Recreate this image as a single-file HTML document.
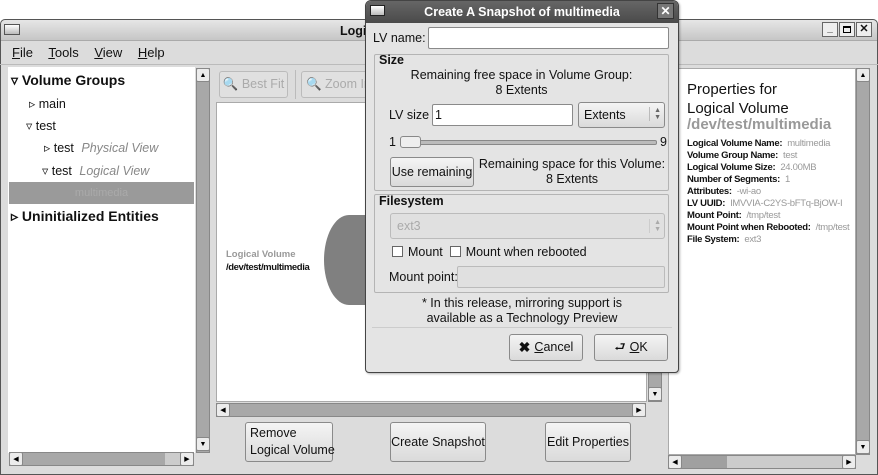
<!DOCTYPE html>
<html><head><meta charset="utf-8"><style>
*{box-sizing:border-box;margin:0;padding:0}
body{width:878px;height:475px;background:#fff;position:relative;overflow:hidden;font-family:"Liberation Sans",sans-serif;font-size:12.5px;color:#111}
.a{position:absolute;white-space:nowrap}
.btn{position:absolute;border:1px solid #8a8a8a;border-radius:3px;background:linear-gradient(#f4f4f4,#dadada);display:flex;align-items:center;justify-content:center;text-align:center;line-height:1.35;white-space:nowrap}
.trough{position:absolute;background:#a8a8a8;border:1px solid #888}
.arr{position:absolute;background:#ececec;border:1px solid #888;border-radius:2px;font-size:7px;display:flex;align-items:center;justify-content:center;color:#000}
.white{position:absolute;background:#fff;border:1px solid #999}
.frame{position:absolute;border:1px solid #b4b4b4;border-radius:2px}
.inp{position:absolute;background:#fff;border:1px solid #8a8a8a;border-radius:2px}
.cb{display:inline-block;width:11px;height:11px;border:1px solid #666;background:#fff;vertical-align:-1px;margin-right:5px}
.bl{font-weight:bold;font-size:9.5px;letter-spacing:-.3px}
.gr{color:#999;font-weight:normal;font-size:9.5px;margin-left:5px}
</style></head><body>
<div class="a" style="left:0;top:19px;width:878px;height:456px;background:#dcdcdc;border:1px solid #555;border-radius:5px 5px 0 0"></div>
<div class="a" style="left:1px;top:20px;width:876px;height:21px;background:linear-gradient(#e6e6e6,#c6c6c6);border-bottom:1px solid #aaa;border-radius:5px 5px 0 0"></div>
<div class="a" style="left:4px;top:24px;width:16px;height:11px;border:1px solid #555;background:linear-gradient(#fff,#bbb)"></div>
<div class="a" style="left:340px;top:24px;font-weight:bold;font-size:12.5px">Logi</div>
<div class="a" style="left:822px;top:22px;width:16px;height:15px;border:1px solid #666;background:#eee;font-size:10px;text-align:center;font-weight:bold;line-height:12px">_</div>
<div class="a" style="left:839px;top:22px;width:16px;height:15px;border:1px solid #666;background:#eee;"><div style="margin:3px;width:8px;height:7px;border:1px solid #000;border-top-width:2px"></div></div>
<div class="a" style="left:856px;top:22px;width:16px;height:15px;border:1px solid #666;background:#eee;font-size:11px;text-align:center;font-weight:bold;line-height:13px">✕</div>
<div class="a" style="left:12px;top:45px;font-size:13px;word-spacing:12px"><u>F</u>ile <u>T</u>ools <u>V</u>iew <u>H</u>elp</div>
<div class="a" style="left:0;top:64px;width:878px;height:1px;background:#bbb"></div>
<div class="white" style="left:8px;top:67px;width:187px;height:386px;border:none"></div>
<div class="a" style="left:11px;top:72px;font-size:14px;font-weight:bold">▿ Volume Groups</div>
<div class="a" style="left:29px;top:96px;font-size:12.5px">▹ main</div>
<div class="a" style="left:26px;top:118px;font-size:12.5px">▿ test</div>
<div class="a" style="left:44px;top:140px;font-size:12.5px">▹ test <i style="color:#888;margin-left:4px">Physical View</i></div>
<div class="a" style="left:42px;top:163px;font-size:12.5px">▿ test <i style="color:#888;margin-left:4px">Logical View</i></div>
<div class="a" style="left:9px;top:182px;width:185px;height:22px;background:#9a9a9a;color:#aaa;font-size:11px;text-align:center;line-height:22px">multimedia</div>
<div class="a" style="left:11px;top:208px;font-size:14px;font-weight:bold">▹ Uninitialized Entities</div>
<div class="trough" style="left:196px;top:68px;width:14px;height:385px"></div>
<div class="arr" style="left:196px;top:68px;width:14px;height:14px">▲</div>
<div class="arr" style="left:196px;top:437px;width:14px;height:14px">▼</div>
<div class="trough" style="left:9px;top:452px;width:185px;height:14px"></div>
<div class="arr" style="left:9px;top:452px;width:14px;height:14px">◀</div>
<div class="a" style="left:165px;top:453px;width:15px;height:12px;background:#ccc"></div>
<div class="arr" style="left:180px;top:452px;width:14px;height:14px">▶</div>
<div class="btn" style="left:219px;top:71px;width:69px;height:27px;color:#aaa;border-color:#bbb;background:#e0e0e0">🔍 Best Fit</div>
<div class="a" style="left:295px;top:70px;width:1px;height:29px;background:#bbb"></div>
<div class="btn" style="left:301px;top:71px;width:70px;height:27px;color:#aaa;border-color:#bbb;background:#e0e0e0;justify-content:flex-start;padding-left:4px;overflow:hidden">🔍 Zoom In</div>
<div class="white" style="left:216px;top:102px;width:431px;height:300px;border-color:#aaa"></div>
<div class="a" style="left:226px;top:249px;font-size:9.5px;font-weight:bold;color:#999">Logical Volume</div>
<div class="a" style="left:226px;top:262px;font-size:9.5px;font-weight:bold;letter-spacing:-.4px">/dev/test/multimedia</div>
<div class="a" style="left:324px;top:215px;width:50px;height:90px;border-radius:50%;background:#808080"></div>
<div class="a" style="left:349px;top:215px;width:20px;height:90px;background:#808080"></div>
<div class="trough" style="left:648px;top:68px;width:14px;height:334px"></div>
<div class="arr" style="left:648px;top:387px;width:14px;height:14px">▼</div>
<div class="trough" style="left:216px;top:403px;width:430px;height:14px"></div>
<div class="arr" style="left:216px;top:403px;width:14px;height:14px">◀</div>
<div class="arr" style="left:632px;top:403px;width:14px;height:14px">▶</div>
<div class="btn" style="left:245px;top:422px;width:88px;height:40px;justify-content:flex-start;text-align:left;padding-left:4px">Remove<br>Logical Volume</div>
<div class="btn" style="left:390px;top:422px;width:96px;height:40px">Create Snapshot</div>
<div class="btn" style="left:545px;top:422px;width:86px;height:40px">Edit Properties</div>
<div class="white" style="left:668px;top:68px;width:188px;height:387px;border-color:#aaa"></div>
<div class="a" style="left:687px;top:80px;font-size:15px;line-height:19px">Properties for<br>Logical Volume</div>
<div class="a" style="left:687px;top:116px;font-size:15px;font-weight:bold;color:#999">/dev/test/multimedia</div>
<div class="a" style="left:687px;top:138px;line-height:12px;width:166px;overflow:hidden">
<div class="bl">Logical Volume Name:<span class="gr">multimedia</span></div>
<div class="bl">Volume Group Name:<span class="gr">test</span></div>
<div class="bl">Logical Volume Size:<span class="gr">24.00MB</span></div>
<div class="bl">Number of Segments:<span class="gr">1</span></div>
<div class="bl">Attributes:<span class="gr">-wi-ao</span></div>
<div class="bl">LV UUID:<span class="gr">IMVVIA-C2YS-bFTq-BjOW-I</span></div>
<div class="bl">Mount Point:<span class="gr">/tmp/test</span></div>
<div class="bl">Mount Point when Rebooted:<span class="gr">/tmp/test</span></div>
<div class="bl">File System:<span class="gr">ext3</span></div>
</div>
<div class="trough" style="left:856px;top:68px;width:14px;height:387px"></div>
<div class="arr" style="left:856px;top:68px;width:14px;height:14px">▲</div>
<div class="arr" style="left:856px;top:440px;width:14px;height:14px">▼</div>
<div class="a" style="left:668px;top:455px;width:188px;height:14px;background:#ccc;border:1px solid #888"></div>
<div class="a" style="left:682px;top:456px;width:45px;height:12px;background:#a0a0a0"></div>
<div class="arr" style="left:668px;top:455px;width:14px;height:14px">◀</div>
<div class="arr" style="left:842px;top:455px;width:14px;height:14px">▶</div>
<div class="a" style="left:365px;top:0;width:314px;height:373px;background:#e4e4e4;border:1px solid #444;border-radius:6px 6px 4px 4px;box-shadow:1px 1px 2px rgba(0,0,0,.3)"></div>
<div class="a" style="left:366px;top:1px;width:312px;height:22px;background:linear-gradient(#666,#4a4a4a);border-radius:5px 5px 0 0;color:#fff;font-weight:bold;font-size:12.5px;text-align:center;line-height:22px">Create A Snapshot of multimedia</div>
<div class="a" style="left:370px;top:5px;width:15px;height:11px;border:1px solid #222;background:linear-gradient(#fff,#bbb)"></div>
<div class="a" style="left:657px;top:3px;width:17px;height:16px;border:1px solid #333;background:#777;color:#fff;font-size:12px;text-align:center;line-height:15px;font-weight:bold">✕</div>
<div class="a" style="left:373px;top:31px">LV name:</div>
<div class="inp" style="left:428px;top:27px;width:241px;height:22px"></div>
<div class="frame" style="left:374px;top:54px;width:295px;height:137px"></div>
<div class="a" style="left:379px;top:53px;font-weight:bold">Size</div>
<div class="a" style="left:374px;top:68px;width:295px;text-align:center;line-height:15px">Remaining free space in Volume Group:<br>8 Extents</div>
<div class="a" style="left:389px;top:108px">LV size</div>
<div class="inp" style="left:432px;top:104px;width:141px;height:22px;padding:3px 2px">1</div>
<div class="btn" style="left:578px;top:102px;width:87px;height:26px;justify-content:flex-start;padding-left:5px">Extents<span style="position:absolute;right:3px;top:4px;font-size:7px;line-height:7px;color:#666;border-left:1px solid #bbb;padding-left:4px">▲<br>▼</span></div>
<div class="a" style="left:389px;top:135px">1</div>
<div class="a" style="left:400px;top:140px;width:257px;height:5px;background:#bbb;border:1px solid #888;border-radius:2px"></div>
<div class="a" style="left:400px;top:136px;width:21px;height:12px;background:#eee;border:1px solid #888;border-radius:3px"></div>
<div class="a" style="left:660px;top:135px">9</div>
<div class="btn" style="left:390px;top:157px;width:84px;height:30px">Use remaining</div>
<div class="a" style="left:478px;top:157px;width:188px;text-align:center;line-height:15px">Remaining space for this Volume:<br>8 Extents</div>
<div class="frame" style="left:374px;top:194px;width:295px;height:99px"></div>
<div class="a" style="left:379px;top:194px;font-weight:bold">Filesystem</div>
<div class="a" style="left:390px;top:213px;width:275px;height:26px;border:1px solid #bbb;border-radius:3px;background:#e0e0e0;color:#aaa;padding:5px 6px">ext3<span style="position:absolute;right:3px;top:5px;font-size:7px;line-height:7px;border-left:1px solid #ccc;padding-left:4px">▲<br>▼</span></div>
<div class="a" style="left:392px;top:245px"><span class="cb"></span>Mount &nbsp;<span class="cb"></span>Mount when rebooted</div>
<div class="a" style="left:389px;top:270px">Mount point:</div>
<div class="a" style="left:457px;top:266px;width:208px;height:22px;border:1px solid #bbb;border-radius:2px;background:#e0e0e0"></div>
<div class="a" style="left:365px;top:296px;width:314px;text-align:center;line-height:15px">* In this release, mirroring support is<br>available as a Technology Preview</div>
<div class="a" style="left:372px;top:327px;width:300px;height:1px;background:#ccc"></div>
<div class="btn" style="left:509px;top:334px;width:74px;height:27px"><b style="font-size:14px;margin-right:4px">✖</b><u>C</u>ancel</div>
<div class="btn" style="left:594px;top:334px;width:74px;height:27px"><span style="margin-right:4px">⮐</span><u>O</u>K</div>
</body></html>
